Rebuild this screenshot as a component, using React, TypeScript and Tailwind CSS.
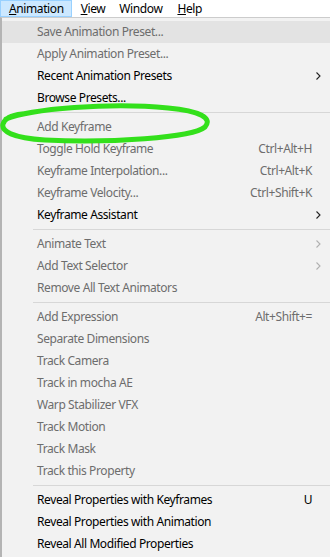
import React from 'react';

type Item =
  | { sep: true }
  | { label: string; shortcut?: string; sub?: boolean; disabled?: boolean; hover?: boolean; sep?: false };

const items: Item[] = [
  { label: 'Save Animation Preset...', disabled: true, hover: true },
  { label: 'Apply Animation Preset...', disabled: true },
  { label: 'Recent Animation Presets', sub: true },
  { label: 'Browse Presets...' },
  { sep: true },
  { label: 'Add Keyframe', disabled: true },
  { label: 'Toggle Hold Keyframe', shortcut: 'Ctrl+Alt+H', disabled: true },
  { label: 'Keyframe Interpolation...', shortcut: 'Ctrl+Alt+K', disabled: true },
  { label: 'Keyframe Velocity...', shortcut: 'Ctrl+Shift+K', disabled: true },
  { label: 'Keyframe Assistant', sub: true },
  { sep: true },
  { label: 'Animate Text', sub: true, disabled: true },
  { label: 'Add Text Selector', sub: true, disabled: true },
  { label: 'Remove All Text Animators', disabled: true },
  { sep: true },
  { label: 'Add Expression', shortcut: 'Alt+Shift+=', disabled: true },
  { label: 'Separate Dimensions', disabled: true },
  { label: 'Track Camera', disabled: true },
  { label: 'Track in mocha AE', disabled: true },
  { label: 'Warp Stabilizer VFX', disabled: true },
  { label: 'Track Motion', disabled: true },
  { label: 'Track Mask', disabled: true },
  { label: 'Track this Property', disabled: true },
  { sep: true },
  { label: 'Reveal Properties with Keyframes', shortcut: 'U' },
  { label: 'Reveal Properties with Animation' },
  { label: 'Reveal All Modified Properties' },
];

const Chevron = ({ disabled }: { disabled?: boolean }) => (
  <svg width="5" height="8" viewBox="0 0 5 8" className="absolute right-[9px]">
    <polyline points="0.5,0.5 4,4 0.5,7.5" fill="none" stroke={disabled ? '#b0b0b0' : '#222'} strokeWidth="1.1" />
  </svg>
);

export default function App() {
  return (
    <div className="relative w-[330px] h-[557px] overflow-hidden bg-white text-[12px] tracking-[-0.4px] font-['Noto_Sans',sans-serif] text-black">
      {/* menu bar */}
      <div className="flex h-[17px] items-center">
        <div className="h-full flex items-center pl-[8px] pr-[7px] bg-[#cce8ff] border border-[#99d1ff]">
          <span><u>A</u>nimation</span>
        </div>
        <span className="ml-[9px]"><u>V</u>iew</span>
        <span className="ml-[14px]">Window</span>
        <span className="ml-[15px]"><u>H</u>elp</span>
      </div>

      {/* dropdown */}
      <div className="h-[540px] bg-[#f2f2f2] border-t border-[#cccccc] border-l-2 border-l-[#b4b4b4] pt-[3px]">
        {items.map((it, i) =>
          it.sep ? (
            <div key={i} className="h-[7px] flex items-center pl-[31px]">
              <div className="h-px w-full bg-[#d7d7d7]" />
            </div>
          ) : (
            <div
              key={i}
              className={`relative h-[22px] flex items-center pl-[35px] pr-[18px] ${it.hover ? 'bg-[#e3e3e3]' : ''} ${it.disabled ? 'text-[#6d6d6d]' : 'text-black'}`}
            >
              <span className="flex-1 whitespace-nowrap">{it.label}</span>
              {it.shortcut && <span className="whitespace-nowrap">{it.shortcut}</span>}
              {it.sub && <Chevron disabled={it.disabled} />}
            </div>
          )
        )}
      </div>

      {/* green annotation */}
      <svg className="absolute left-0 top-0 pointer-events-none" width="330" height="557">
        <path
          d="M 6 119 C 30 109, 110 102, 168 108 C 200 111, 213 118, 205 127 C 192 138, 110 143, 45 140 C 12 138, 1 131, 3 124 C 5 118, 12 115, 22 114"
          fill="none"
          stroke="#33e01b"
          strokeWidth="5"
          strokeLinecap="round"
        />
      </svg>
    </div>
  );
}
